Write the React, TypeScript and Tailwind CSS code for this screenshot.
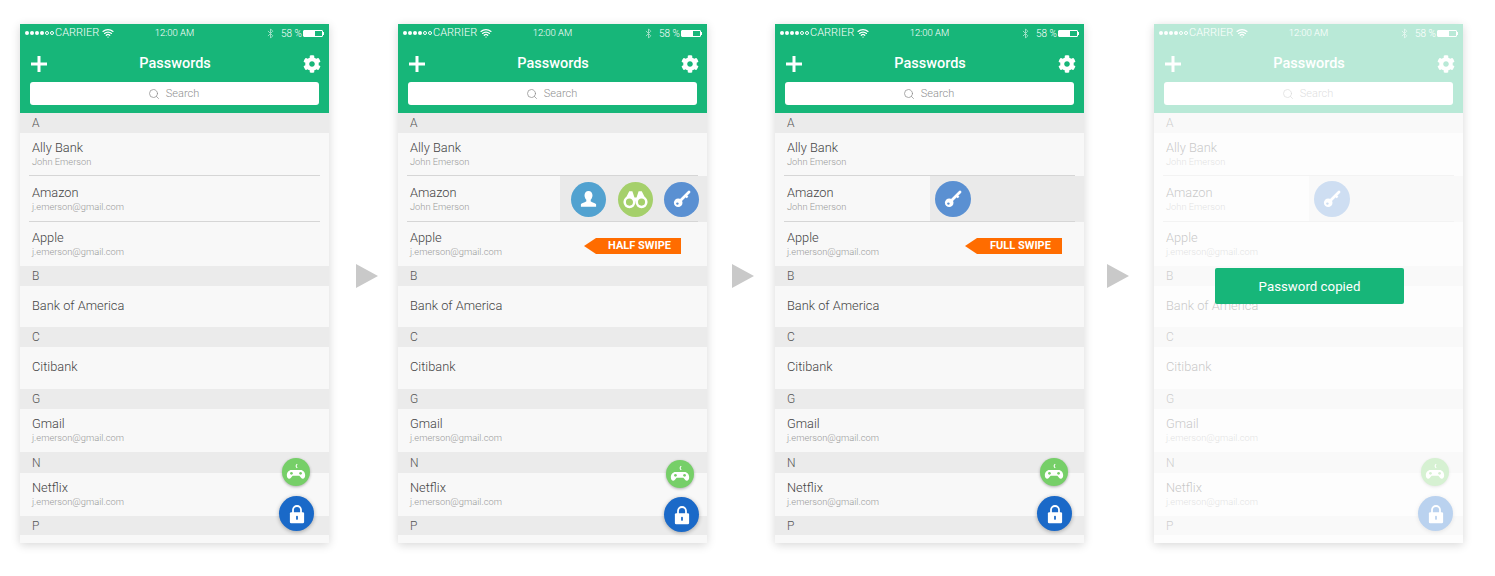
import { Bluetooth, Search, Wifi } from 'lucide-react';
import { FaCog } from 'react-icons/fa';
import clsx from 'clsx';

type Row =
  | { kind: 'section'; label: string; h: string }
  | { kind: 'item'; id: string; name: string; sub?: string; h: string; divider?: boolean };

const rows: Row[] = [
  { kind: 'section', label: 'A', h: 'h-[20px]' },
  { kind: 'item', id: 'ally', name: 'Ally Bank', sub: 'John Emerson', h: 'h-[43px]', divider: true },
  { kind: 'item', id: 'amazon', name: 'Amazon', sub: 'j.emerson@gmail.com', h: 'h-[46px]', divider: true },
  { kind: 'item', id: 'apple', name: 'Apple', sub: 'j.emerson@gmail.com', h: 'h-[44px]' },
  { kind: 'section', label: 'B', h: 'h-[20px]' },
  { kind: 'item', id: 'boa', name: 'Bank of America', h: 'h-[41px]' },
  { kind: 'section', label: 'C', h: 'h-[20px]' },
  { kind: 'item', id: 'citi', name: 'Citibank', h: 'h-[42px]' },
  { kind: 'section', label: 'G', h: 'h-[20px]' },
  { kind: 'item', id: 'gmail', name: 'Gmail', sub: 'j.emerson@gmail.com', h: 'h-[43px]' },
  { kind: 'section', label: 'N', h: 'h-[21px]' },
  { kind: 'item', id: 'netflix', name: 'Netflix', sub: 'j.emerson@gmail.com', h: 'h-[43px]' },
  { kind: 'section', label: 'P', h: 'h-[19px]' },
  { kind: 'item', id: 'end', name: '', h: 'h-[8px]' },
];

const UserIcon = () => (
  <svg viewBox="0 0 20 20" className="h-[19px] w-[19px]" fill="white">
    <path d="M10 1c2.600 0 4.200 2 4.200 4.600 0 2-.8 3.700-1.900 4.700v1.500c0 .8 4.700 1.700 5.700 3.200v2.500H2v-2.500c1-1.500 5.700-2.400 5.700-3.200v-1.500C6.600 9.300 5.800 7.600 5.800 5.600 5.800 3 7.400 1 10 1z" />
  </svg>
);

const BinocularsIcon = () => (
  <svg viewBox="0 0 24 18" className="h-[19px] w-[25px]">
    <path d="M6 1h3l2 6h2l2-6h3l5 10H1z" fill="white" />
    <circle cx="6.200" cy="11.500" r="4.600" fill="#a5d06b" stroke="white" strokeWidth="2.400" />
    <circle cx="17.800" cy="11.500" r="4.600" fill="#a5d06b" stroke="white" strokeWidth="2.400" />
  </svg>
);

const KeyIcon = ({ hole }: { hole: string }) => (
  <svg viewBox="0 0 20 20" className="h-[20px] w-[20px]">
    <path d="M7.500 12.500 17 3" stroke="white" strokeWidth="2.800" strokeLinecap="round" />
    <path d="M13.500 6.500l2 2" stroke="white" strokeWidth="2.400" />
    <circle cx="6.200" cy="13.800" r="4.300" fill="white" />
    <circle cx="5.400" cy="14.600" r="1.200" fill={hole} />
  </svg>
);

const GamepadIcon = ({ hole }: { hole: string }) => (
  <svg viewBox="0 0 24 22" className="h-[19px] w-[20px]">
    <path d="M13.500 1c-1.800 1-1.800 3 0 4.500" fill="none" stroke="white" strokeWidth="1.300" />
    <path d="M6.500 8h11c3 0 5.500 2.800 5.500 6.300 0 2.500-1.200 4.200-2.800 4.200-1.700 0-2.600-2-4.200-3.500H8c-1.600 1.500-2.500 3.500-4.200 3.500C2.200 18.500 1 16.800 1 14.300 1 10.800 3.500 8 6.500 8z" fill="white" />
    <circle cx="6.500" cy="12" r="1.600" fill={hole} />
    <circle cx="17.500" cy="12" r="1.600" fill={hole} />
  </svg>
);

const LockIcon = ({ hole }: { hole: string }) => (
  <svg viewBox="0 0 18 22" className="h-[20px] w-[16px]">
    <path d="M4.500 10V6.500a4.500 4.500 0 0 1 9 0V10" fill="none" stroke="white" strokeWidth="2" />
    <rect x="1" y="9" width="16" height="12.500" rx="1.500" fill="white" />
    <rect x="8" y="13" width="2" height="4.500" rx="1" fill={hole} />
  </svg>
);

const Circle = ({ color, size, children }: { color: string; size: string; children: React.ReactNode }) => (
  <div className={clsx('flex shrink-0 items-center justify-center rounded-full', color, size)}>{children}</div>
);

function StatusBar() {
  return (
    <div className="grid h-[17px] grid-cols-3 items-center pl-[5px] pr-[5px] pt-[1px] text-[10px] font-light text-white">
      <div className="flex items-center">
        <div className="flex w-[30px] items-center gap-[1px]">
          {[0, 1, 2, 3].map(i => <span key={i} className="h-[4px] w-[4px] rounded-full bg-white" />)}
          {[0, 1].map(i => <span key={i} className="h-[4px] w-[4px] rounded-full border-[0.5px] border-white" />)}
        </div>
        <span className="text-[11px]">CARRIER</span>
        <Wifi size={12} strokeWidth={2.5} className="ml-[3px]" />
      </div>
      <div className="pl-[30px] text-[9.500px] whitespace-nowrap">12:00 AM</div>
      <div className="flex items-center justify-end">
        <Bluetooth size={11} className="mr-[5px] opacity-60" />
        <span className="mr-[1px]">58 %</span>
        <div className="flex h-[7px] w-[20px] items-center rounded-[1px] border-[0.5px] border-white">
          <div className="h-full w-[11px] bg-white" />
        </div>
        <div className="h-[3px] w-[1px] bg-white" />
      </div>
    </div>
  );
}

function Header() {
  return (
    <div className="h-[89px] bg-[#17b679]">
      <StatusBar />
      <div className="flex h-[41px] items-center justify-between pl-[11px] pr-[8px] pt-[5px]">
        <svg viewBox="0 0 16 16" className="h-[16px] w-[16px]">
          <path d="M6.500 0h3v6.500H16v3H9.500V16h-3V9.500H0v-3h6.500z" fill="white" />
        </svg>
        <span className="text-[14.500px] font-medium text-white">Passwords</span>
        <FaCog size={18} color="white" />
      </div>
      <div className="mx-[10px] flex h-[23px] items-center justify-center gap-[6px] rounded-[3px] bg-white pr-[2px] pt-[1px] text-[11px] font-light text-[#8f8f8f]">
        <Search size={12} strokeWidth={1.5} />
        <span>Search</span>
      </div>
    </div>
  );
}

function SwipeTag({ label }: { label: string }) {
  return (
    <div className="mt-[4px] flex h-[16px] w-[97px] items-center">
      <svg viewBox="0 0 12 16" className="h-[16px] w-[12px] shrink-0">
        <path d="M12 0v16L0 8z" fill="#ff6c00" />
      </svg>
      <div className="flex h-full flex-1 items-center justify-center bg-[#ff6c00] pl-[2px] text-[11px] font-bold text-white">{label}</div>
    </div>
  );
}

type Mode = 'none' | 'half' | 'full' | 'copied';

function ListRow({ row, mode }: { row: Row; mode: Mode }) {
  if (row.kind === 'section') {
    return (
      <div className={clsx('flex items-center bg-[#ebebeb] pl-[12px] text-[12px] font-light text-[#555]', row.h)}>{row.label}</div>
    );
  }
  const swiped = row.id === 'amazon' && mode !== 'none';
  const sub = swiped ? 'John Emerson' : row.sub;
  return (
    <div className={clsx('relative flex items-center justify-between bg-[#f8f8f8] pl-[12px]', row.h)}>
      {row.name && (
        <div className="pb-[2px]">
          <div className="text-[12.800px] font-light leading-[16px] text-[#444]">{row.name}</div>
          {sub && <div className="text-[9.300px] font-light leading-[11px] text-[#999]">{sub}</div>}
        </div>
      )}
      {row.id === 'apple' && mode === 'half' && <div className="mr-[26px]"><SwipeTag label="HALF SWIPE" /></div>}
      {row.id === 'apple' && mode === 'full' && <div className="mr-[22px]"><SwipeTag label="FULL SWIPE" /></div>}
      {swiped && mode === 'half' && (
        <div className="flex h-full w-[147px] items-center gap-[11.500px] bg-[#eaeaea] pl-[11px]">
          <Circle color="bg-[#52a2d0]" size="h-[35px] w-[35px]"><UserIcon /></Circle>
          <Circle color="bg-[#a5d06b]" size="h-[35px] w-[35px]"><BinocularsIcon /></Circle>
          <Circle color="bg-[#5a90d2]" size="h-[35px] w-[35px]"><KeyIcon hole="#5a90d2" /></Circle>
        </div>
      )}
      {swiped && (mode === 'full' || mode === 'copied') && (
        <div className="flex h-full w-[154px] items-center bg-[#eaeaea] pl-[5px]">
          <Circle color="bg-[#5a90d2]" size="h-[36px] w-[36px]"><KeyIcon hole="#5a90d2" /></Circle>
        </div>
      )}
      {row.divider && <div className="absolute bottom-0 left-[9px] right-[9px] h-px bg-[#d6d6d6]" />}
    </div>
  );
}

function Phone({ mode, game, lock }: { mode: Mode; game: string; lock: string }) {
  const faded = mode === 'copied';
  return (
    <div className="relative h-[519px] w-[309px] shrink-0 overflow-hidden shadow-[0_2px_9px_rgba(0,0,0,0.16)]">
      <Header />
      {rows.map((r, i) => <ListRow key={i} row={r} mode={mode} />)}
      <div className={clsx('absolute flex h-[28px] w-[28px] items-center justify-center rounded-full bg-[#76cf68] shadow-[0_1px_3px_rgba(0,0,0,0.3)]', game)}>
        <GamepadIcon hole="#76cf68" />
      </div>
      <div className={clsx('absolute flex h-[35px] w-[35px] items-center justify-center rounded-full bg-[#1a69c8] shadow-[0_1px_4px_rgba(0,0,0,0.3)]', lock)}>
        <LockIcon hole="#1a69c8" />
      </div>
      {faded && <div className="absolute inset-0 bg-white/70" />}
      {faded && (
        <div className="absolute left-[61px] top-[244px] flex h-[36px] w-[189px] items-center justify-center rounded-[2px] bg-[#17b679] pt-[1px] text-[13.300px] text-white">
          Password copied
        </div>
      )}
    </div>
  );
}

const Arrow = ({ space }: { space: string }) => (
  <div className={clsx('shrink-0 pt-[240px]', space)}>
    <svg viewBox="0 0 22 24" className="h-[24px] w-[22px]">
      <path d="M0 0l22 12L0 24z" fill="#c9c9c9" />
    </svg>
  </div>
);

export default function App() {
  return (
    <div className="flex h-[576px] w-[1495px] items-start overflow-hidden bg-white pl-[20px] pt-[24px] font-['Roboto',sans-serif]">
      <Phone mode="none" game="right-[19px] top-[434px]" lock="right-[15px] top-[472px]" />
      <Arrow space="w-[69px] pl-[27px]" />
      <Phone mode="half" game="right-[13px] top-[436px]" lock="right-[8px] top-[473px]" />
      <Arrow space="w-[68px] pl-[25px]" />
      <Phone mode="full" game="right-[16px] top-[434px]" lock="right-[12px] top-[472px]" />
      <Arrow space="w-[70px] pl-[23px]" />
      <Phone mode="copied" game="right-[14px] top-[434px]" lock="right-[10px] top-[472px]" />
    </div>
  );
}
